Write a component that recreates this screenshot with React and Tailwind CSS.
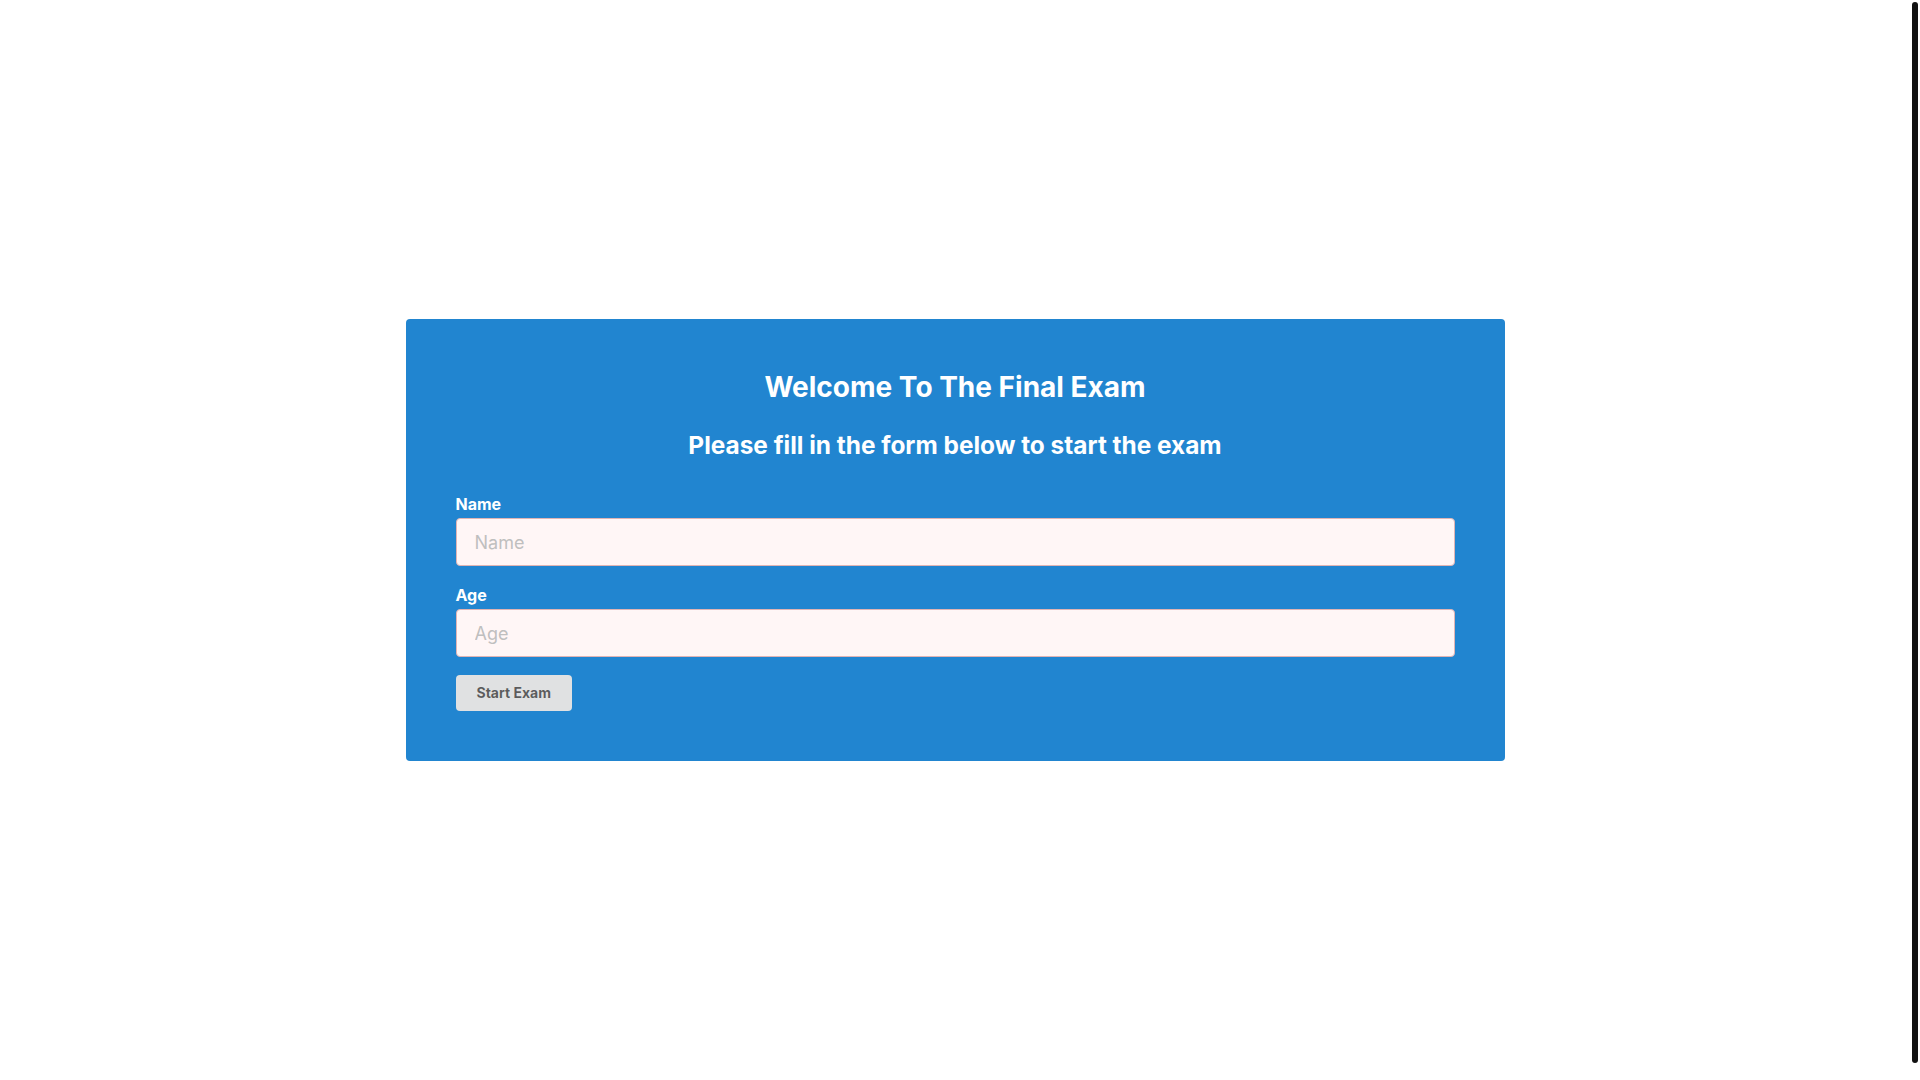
import React, { useState } from 'react';

function Field({ label, value, onChange }) {
  return (
    <div className="flex flex-col">
      <label className="text-[16px] leading-[19px] font-bold text-white mb-[4px]">{label}</label>
      <input
        type="text"
        placeholder={label}
        value={value}
        onChange={(e) => onChange(e.target.value)}
        className="h-[48px] w-full rounded-[4px] border border-[#e0b4b4] bg-[#fff6f6] px-[18px] text-[18px] text-[#9f3a38] placeholder:text-[#bfbfbf] outline-none"
      />
    </div>
  );
}

export default function App() {
  const [name, setName] = useState('');
  const [age, setAge] = useState('');

  return (
    <div className="flex h-[1080px] w-full bg-white" style={{ fontFamily: 'Inter, "Noto Sans", sans-serif' }}>
      <div className="flex flex-1 items-center justify-center pr-[2px]">
        <div className="w-[1099px] rounded-[4px] bg-[#2185d0] p-[50px]">
          {/* Header */}
          <h1 className="text-center text-[28px] leading-[36px] font-bold text-white">Welcome To The Final Exam</h1>
          <h2 className="mt-[26px] text-center text-[24.4px] leading-[28px] font-bold text-white">
            Please fill in the form below to start the exam
          </h2>

          {/* Form */}
          <form className="mt-[36px] flex flex-col" onSubmit={(e) => e.preventDefault()}>
            <Field label="Name" value={name} onChange={setName} />
            <div className="mt-[20px]">
              <Field label="Age" value={age} onChange={setAge} />
            </div>
            <div className="mt-[18px]">
              <button
                type="submit"
                className="h-[36px] rounded-[4px] bg-[#e0e1e2] px-[21px] text-[14px] leading-[14px] font-bold text-black/60"
              >
                Start Exam
              </button>
            </div>
          </form>
        </div>
      </div>
      {/* scrollbar strip */}
      <div className="w-[8px] pt-[2px]">
        <div className="h-[1061px] w-[6px] rounded-full bg-[#111111]"></div>
      </div>
    </div>
  );
}
